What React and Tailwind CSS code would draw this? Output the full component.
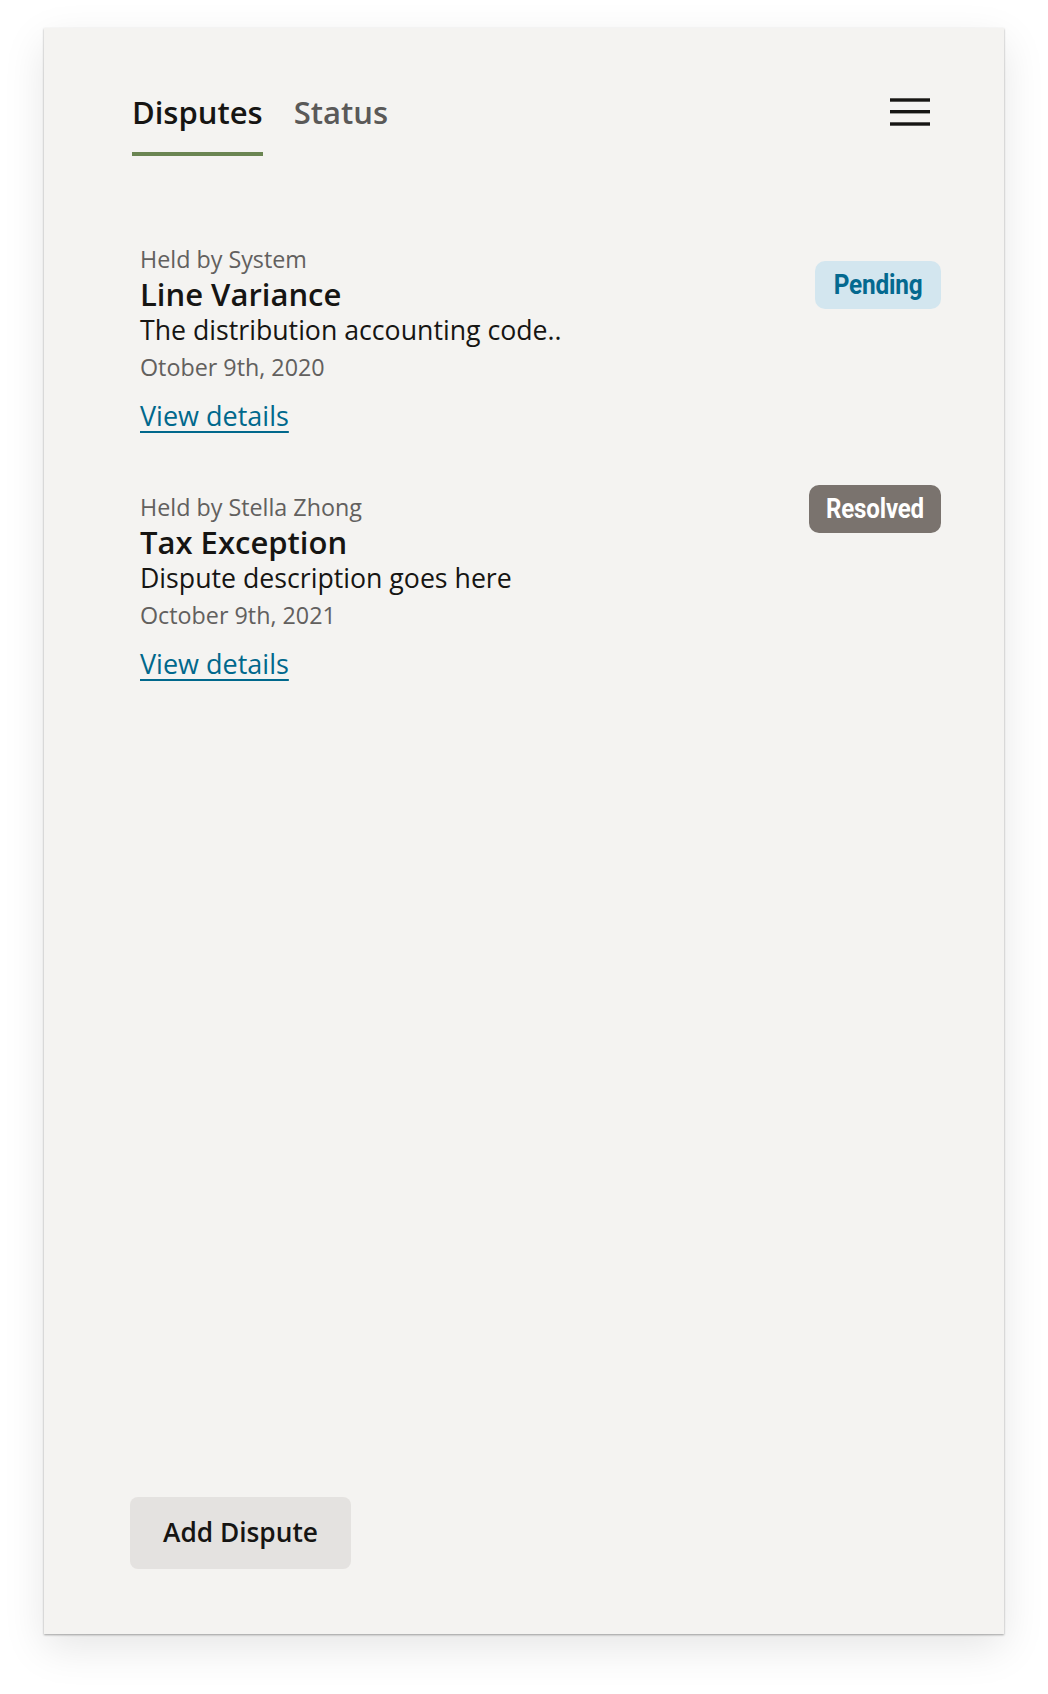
import { Menu } from "lucide-react";

const disputes = [
  {
    id: 1,
    heldBy: "Held by System",
    title: "Line Variance",
    description: "The distribution accounting code..",
    date: "Otober 9th, 2020",
    status: "Pending",
  },
  {
    id: 2,
    heldBy: "Held by Stella Zhong",
    title: "Tax Exception",
    description: "Dispute description goes here",
    date: "October 9th, 2021",
    status: "Resolved",
  },
];

const StatusBadge = ({ status }) => {
  if (status === "Pending") {
    return (
      <span className="mt-[18px] flex h-[48px] w-[126px] items-center justify-center rounded-[10px] bg-[#d3e6ef] font-[Roboto,sans-serif] text-[28px] font-bold text-[#04698f]">
        <span className="scale-x-[0.87] tracking-[-0.2px]">{status}</span>
      </span>
    );
  }
  return (
    <span className="mt-[-6px] flex h-[48px] w-[132px] items-center justify-center rounded-[10px] bg-[#7a736e] font-[Roboto,sans-serif] text-[28px] font-bold text-white">
      <span className="scale-x-[0.86] tracking-[-0.2px]">{status}</span>
    </span>
  );
};

const DisputeItem = ({ item }) => (
  <div className="flex items-start justify-between">
    <div className="flex flex-col">
      <p className="text-[23.3px] leading-[32px] text-[#62605e]">{item.heldBy}</p>
      <h2 className="text-[31px] leading-[38px] font-semibold text-[#161513]">
        {item.title}
      </h2>
      <p className="text-[26.7px] leading-[33px] text-[#161513]">
        {item.description}
      </p>
      <p className="mt-[5px] text-[23.3px] leading-[32px] text-[#62605e]">{item.date}</p>
      <a
        href="#"
        className="mt-[16px] self-start text-[27px] leading-[33px] text-[#00688c] underline decoration-2 underline-offset-[5px]"
      >
        View details
      </a>
    </div>
    <StatusBadge status={item.status} />
  </div>
);

const App = () => {
  return (
    <div className="h-[1694px] w-[1048px] bg-white pl-[44px] pt-[28px] font-['Open_Sans','Noto_Sans',sans-serif]">
      <div className="flex h-[1606px] w-[960px] flex-col bg-[#f4f3f1] shadow-[0_1px_2px_rgba(0,0,0,0.35),0_14px_40px_rgba(0,0,0,0.10)]">
        {/* Header tabs */}
        <div className="flex items-start justify-between pl-[88px] pr-[74px] pt-[64px]">
          <div className="flex gap-[31px]">
            <button className="border-b-[4px] border-[#6a8552] pb-[20px] text-[31px] leading-[40px] font-semibold text-[#161513]">
              Disputes
            </button>
            <button className="pb-[24px] text-[31px] leading-[40px] font-semibold text-[#5a5958]">
              Status
            </button>
          </div>
          <svg width="40" height="28" viewBox="0 0 40 28" className="mt-[6px]">
            <rect x="0" y="0.3" width="40" height="3.4" fill="#161513" />
            <rect x="0" y="12" width="40" height="3.4" fill="#161513" />
            <rect x="0" y="24.3" width="40" height="3.4" fill="#161513" />
          </svg>
        </div>

        {/* Dispute list */}
        <div className="mt-[87px] flex flex-col gap-[59px] pl-[96px] pr-[63px]">
          {disputes.map((item) => (
            <DisputeItem key={item.id} item={item} />
          ))}
        </div>

        {/* Footer */}
        <div className="mt-auto pb-[65px] pl-[86px]">
          <button className="h-[72px] w-[221px] rounded-[8px] bg-[#e4e2e0] text-[26.3px] font-semibold text-[#161513]">
            Add Dispute
          </button>
        </div>
      </div>
    </div>
  );
};

export default App;
